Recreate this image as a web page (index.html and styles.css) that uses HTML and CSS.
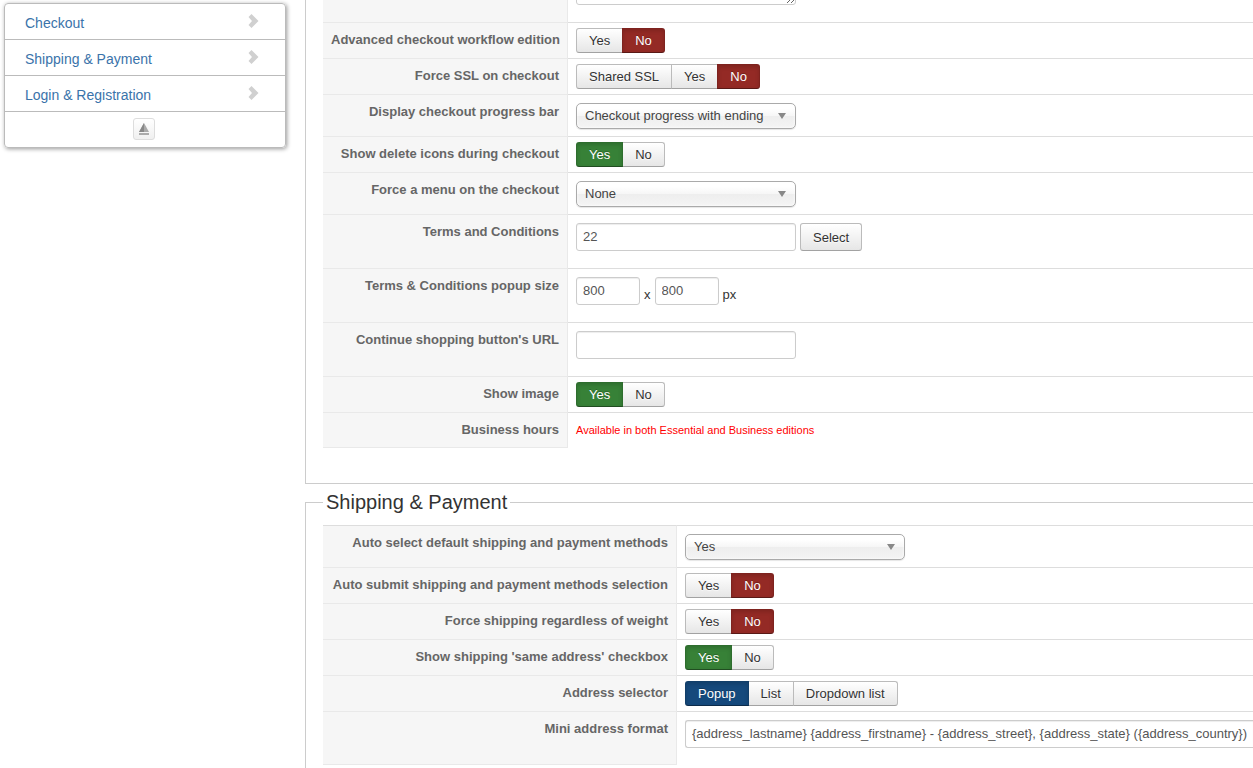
FILE: index.html
```
<!DOCTYPE html>
<html lang="en">
<head>
<meta charset="utf-8">
<title>Checkout configuration</title>
<link rel="stylesheet" href="styles.css">
</head>
<body>
<svg class="defs" aria-hidden="true">
  <symbol id="chevron" viewBox="0 0 11 14"><path d="M.5 3 3.500 0 10.500 7 3.500 14 .5 11 4 7Z" fill="#d0d0d0"/></symbol>
</svg>
<div class="page">
  <nav class="side" aria-label="Sections">
    <ul class="menu">
      <li><a href="#checkout">Checkout<svg class="chevron"><use href="#chevron"/></svg></a></li>
      <li><a href="#shipping">Shipping &amp; Payment<svg class="chevron"><use href="#chevron"/></svg></a></li>
      <li><a href="#login">Login &amp; Registration<svg class="chevron"><use href="#chevron"/></svg></a></li>
      <li class="menu-foot"><button class="collapse" type="button" aria-label="Collapse menu">
        <svg width="12" height="14" viewBox="0 0 12 14"><path d="M6 1 11 10H1Z" fill="#aaa"/><path d="M6 1V10H1Z" fill="#888"/><path d="M1 11h10v2H1z" fill="#aaa"/></svg>
      </button></li>
    </ul>
  </nav>
  <main class="main">
    <fieldset class="panel panel-first" id="checkout">
      <table class="options options-checkout">
        <tr class="row-cut"><th></th><td><div class="cut"><textarea aria-label="Text"></textarea></div></td></tr>
        <tr><th>Advanced checkout workflow edition</th><td class="tight"><div class="group" role="group" aria-label="Advanced checkout workflow edition"><button type="button">Yes</button><button type="button" class="no">No</button></div></td></tr>
        <tr><th>Force SSL on checkout</th><td class="tight"><div class="group" role="group" aria-label="Force SSL on checkout"><button type="button">Shared SSL</button><button type="button">Yes</button><button type="button" class="no">No</button></div></td></tr>
        <tr><th><label for="progress">Display checkout progress bar</label></th><td class="choice"><div class="drop"><select id="progress"><option>Checkout progress with ending</option></select></div></td></tr>
        <tr><th>Show delete icons during checkout</th><td class="tight"><div class="group" role="group" aria-label="Show delete icons during checkout"><button type="button" class="yes">Yes</button><button type="button">No</button></div></td></tr>
        <tr><th><label for="force-menu">Force a menu on the checkout</label></th><td class="choice"><div class="drop"><select id="force-menu"><option>None</option></select></div></td></tr>
        <tr><th><label for="terms">Terms and Conditions</label></th><td><div class="fields"><input class="text" type="text" id="terms" value="22"><button type="button" class="pick">Select</button></div></td></tr>
        <tr><th><label for="popup-w">Terms &amp; Conditions popup size</label></th><td><div class="fields"><input class="text short" type="text" id="popup-w" value="800"><span class="unit">x</span><input class="text short" type="text" aria-label="Popup height" value="800"><span class="unit">px</span></div></td></tr>
        <tr><th><label for="url">Continue shopping button's URL</label></th><td><div class="fields"><input class="text" type="text" id="url"></div></td></tr>
        <tr><th>Show image</th><td class="tight"><div class="group" role="group" aria-label="Show image"><button type="button" class="yes">Yes</button><button type="button">No</button></div></td></tr>
        <tr><th>Business hours</th><td><span class="notice">Available in both Essential and Business editions</span></td></tr>
      </table>
    </fieldset>
    <fieldset class="panel" id="shipping">
      <legend>Shipping &amp; Payment</legend>
      <table class="options options-shipping">
        <tr><th><label for="auto">Auto select default shipping and payment methods</label></th><td class="choice"><div class="drop"><select id="auto"><option>Yes</option></select></div></td></tr>
        <tr><th>Auto submit shipping and payment methods selection</th><td class="tight"><div class="group" role="group" aria-label="Auto submit selection"><button type="button">Yes</button><button type="button" class="no">No</button></div></td></tr>
        <tr><th>Force shipping regardless of weight</th><td class="tight"><div class="group" role="group" aria-label="Force shipping regardless of weight"><button type="button">Yes</button><button type="button" class="no">No</button></div></td></tr>
        <tr><th>Show shipping 'same address' checkbox</th><td class="tight"><div class="group" role="group" aria-label="Show shipping same address checkbox"><button type="button" class="yes">Yes</button><button type="button">No</button></div></td></tr>
        <tr><th>Address selector</th><td class="tight"><div class="group" role="group" aria-label="Address selector"><button type="button" class="on">Popup</button><button type="button">List</button><button type="button">Dropdown list</button></div></td></tr>
        <tr><th><label for="mini">Mini address format</label></th><td><div class="fields"><input class="text wide" type="text" id="mini" value="{address_lastname} {address_firstname} - {address_street}, {address_state} ({address_country})"></div></td></tr>
      </table>
    </fieldset>
  </main>
</div>
</body>
</html>
```
FILE: styles.css
```
* { box-sizing: border-box; }
body {
  margin: 0;
  overflow: hidden;
  background: #fff;
  color: #333;
  font: 13px/18px "Liberation Sans", Arial, sans-serif;
}
button, input, select, textarea { font: inherit; color: inherit; margin: 0; }
.defs { display: none; }
.page { display: flex; align-items: flex-start; gap: 19px; padding-left: 4px; }

/* side menu */
.side { flex: 0 0 282px; padding-top: 3px; }
.menu {
  margin: 0;
  padding: 0;
  list-style: none;
  border: 1px solid #bbb;
  border-radius: 4px;
  box-shadow: 1px 1px 4px rgba(0, 0, 0, .4);
}
.menu li + li { border-top: 1px solid #bbb; }
.menu a {
  display: flex;
  justify-content: space-between;
  height: 35px;
  padding: 8px 26px 0 20px;
  color: #3a73aa;
  font-size: 14px;
  line-height: 22px;
  text-decoration: none;
}
.chevron { width: 11px; height: 14px; margin-top: 2px; }
.menu-foot { display: flex; justify-content: center; padding: 6px 2px 7px 0; }
.collapse {
  display: flex;
  align-items: center;
  justify-content: center;
  width: 22px;
  height: 22px;
  padding: 0;
  border: 1px solid #ddd;
  border-radius: 3px;
  background: linear-gradient(#fff, #f0f0f0);
}

/* option panels */
.main { flex: 1; min-width: 0; }
.panel {
  min-width: 0;
  margin: 0;
  padding: 5px 0 36px 17px;
  border: 1px solid #ccc;
  border-right: 0;
}
.panel-first { padding-top: 0; padding-bottom: 35px; border-top: 0; }
legend { padding: 0 3px; font-size: 20px; line-height: 36px; }
.options { width: 100%; table-layout: fixed; border-collapse: separate; border-spacing: 0; }
.options-checkout th { width: 245px; }
.options-shipping th { width: 354px; }
.options th {
  padding: 8px;
  border-top: 1px solid #e9e9e9;
  border-right: 1px solid #e9e9e9;
  background: #f6f6f6;
  color: #666;
  font-weight: bold;
  text-align: right;
  vertical-align: top;
}
.options label { white-space: nowrap; }
.options th { white-space: nowrap; }
.options tr:last-child th { border-bottom: 1px solid #e9e9e9; }
.options td {
  padding: 8px 0 8px 8px;
  border-top: 1px solid #ddd;
  vertical-align: top;
}
.options tr:first-child th { border-top-color: #ddd; }
.options .tight { padding-top: 5px; padding-bottom: 5px; }
.options .choice { padding-bottom: 7px; }
.options .row-cut th, .options .row-cut td { border-top: 0; padding-top: 0; padding-bottom: 17px; }
.cut { display: flex; align-items: flex-end; height: 5px; overflow: hidden; }
textarea { flex: none; width: 220px; height: 60px; border: 1px solid #ccc; border-radius: 3px; resize: both; }

/* toggle buttons */
.group { display: flex; }
.group button, .pick {
  padding: 4px 12px;
  border: 1px solid #bbb;
  border-bottom-color: #a2a2a2;
  background: linear-gradient(#fff, #e6e6e6);
  line-height: 15px;
  text-shadow: 0 1px 1px rgba(255, 255, 255, .75);
}
.group button + button { margin-left: -1px; }
.group button:first-child { border-radius: 3px 0 0 3px; }
.group button:last-child { border-radius: 0 3px 3px 0; }
.group .yes, .group .no, .group .on {
  z-index: 1;
  border-color: rgba(0, 0, 0, .15) rgba(0, 0, 0, .15) rgba(0, 0, 0, .4);
  box-shadow: inset 0 2px 4px rgba(0, 0, 0, .15);
  color: #fff;
  text-shadow: 0 -1px 0 rgba(0, 0, 0, .25);
}
.group .yes { background: #378137; }
.group .no { background: #942a25; }
.group .on { background: #15497c; }
.pick { height: 28px; border-radius: 3px; }

/* drop-downs */
.drop { position: relative; width: 220px; height: 26px; }
.drop::after {
  content: "";
  position: absolute;
  top: 10px;
  right: 10px;
  border: 4px solid transparent;
  border-top: 6px solid #888;
  border-bottom: 0;
  pointer-events: none;
}
select {
  appearance: none;
  display: block;
  width: 100%;
  height: 26px;
  padding: 0 26px 0 8px;
  border: 1px solid #aaa;
  border-radius: 5px;
  background: linear-gradient(#fff 20%, #f6f6f6 50%, #eee 52%, #f4f4f4);
  box-shadow: inset 0 0 3px #fff, 0 1px 1px rgba(0, 0, 0, .1);
}
.drop select { color: #444; }

/* text fields */
.fields { display: flex; align-items: flex-start; gap: 4px; padding-bottom: 9px; }
.text {
  width: 220px;
  height: 28px;
  padding: 3px 6px 5px;
  border: 1px solid #ccc;
  border-radius: 3px;
  background: #fff;
  box-shadow: inset 0 1px 1px rgba(0, 0, 0, .075);
  color: #555;
}
.short { width: 64px; }
.wide { flex: 1; min-width: 0; border-right: 0; border-radius: 3px 0 0 3px; }
.unit { padding-top: 9px; }
.notice { color: #f00; font-size: 11px; }
```
